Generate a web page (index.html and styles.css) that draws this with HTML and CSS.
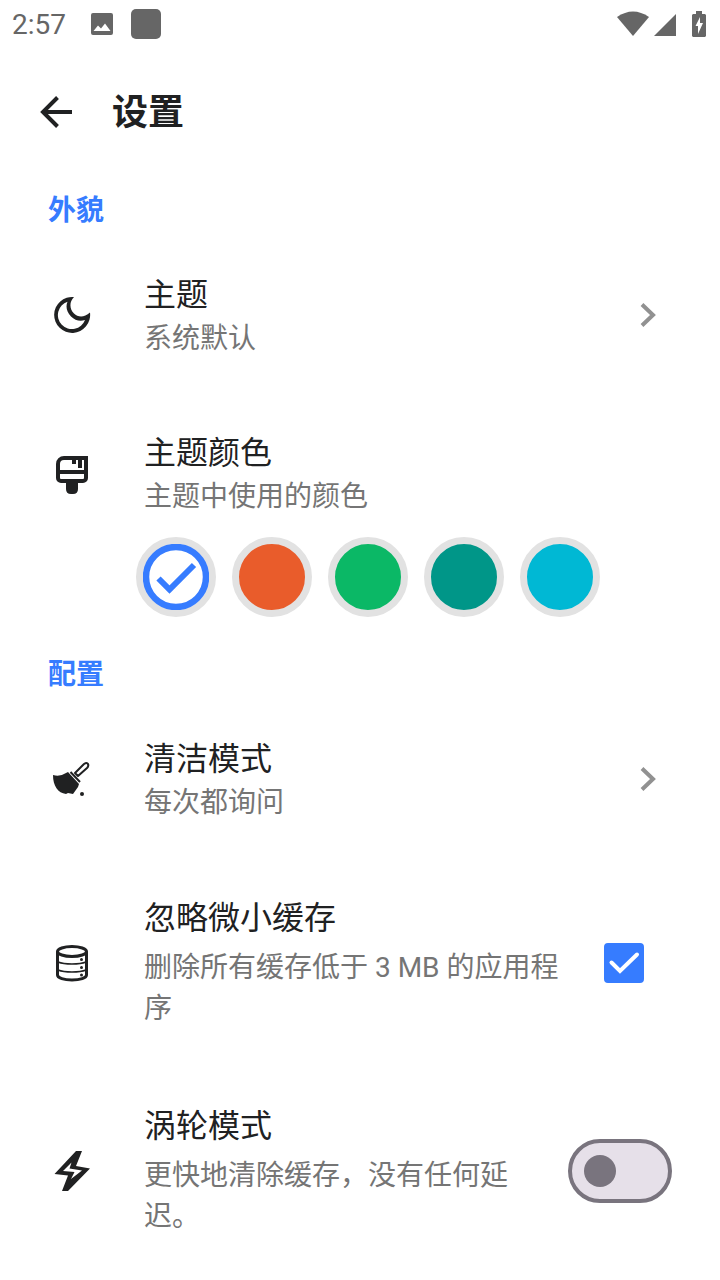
FILE: index.html
```html
<!DOCTYPE html>
<html lang="zh-CN">
<head>
<meta charset="utf-8">
<meta name="viewport" content="width=device-width, initial-scale=1">
<title>设置</title>
<link rel="stylesheet" href="styles.css">
</head>
<body>
<div class="status">
  <span class="clock">2:57</span>
  <svg class="status-picture" width="24" height="24" viewBox="0 0 24 24" aria-hidden="true"><path fill="#666" fill-rule="evenodd" d="M3 1h18a2 2 0 0 1 2 2v18a2 2 0 0 1-2 2H3a2 2 0 0 1-2-2V3a2 2 0 0 1 2-2zM3.500 19h17l-5.500-7.500-4 5-3-3z"/></svg>
  <span class="status-app"></span>
  <svg class="wifi" width="32" height="26" viewBox="0 0 32 26" aria-hidden="true"><path fill="#666" d="M0 6Q16-5 32 6L16 25z"/></svg>
  <svg class="signal" width="22" height="22" viewBox="0 0 22 22" aria-hidden="true"><path fill="#666" d="M22 0v22H0z"/></svg>
  <svg class="battery" width="14" height="26" viewBox="0 0 14 26" aria-hidden="true"><path fill="#666" fill-rule="evenodd" d="M4 0h6v3h3l1 1v21l-1 1H1l-1-1V4l1-1h3zM8 6L3.500 15H6v8l5-11H8z"/></svg>
</div>

<header class="appbar">
  <button class="back" type="button" aria-label="返回">
    <svg width="32" height="32" viewBox="0 0 32 32" aria-hidden="true"><path fill="none" stroke="#202122" stroke-width="4" d="M32 16H3M17.500 1.500L3 16l14.500 14.500"/></svg>
  </button>
  <h1 class="title">设置</h1>
</header>

<main>
  <section>
    <h2 class="heading">外貌</h2>
    <button class="row" type="button">
      <svg class="icon" width="48" height="48" viewBox="0 0 48 48" aria-hidden="true"><path fill="#202122" fill-rule="evenodd" d="M26 6A18 18 0 1 0 42 21.500C36 27 30 26.500 26 22.500C21.500 18 21 11 26 6zM19.500 10.800A14 14 0 1 0 37 29C32 30.500 27 29.500 23 25.500C18.500 21 17.500 15.500 19.500 10.800z"/></svg>
      <span class="text"><span class="name">主题</span><span class="note">系统默认</span></span>
      <svg class="chevron" width="16" height="24" viewBox="0 0 16 24" aria-hidden="true"><path fill="none" stroke="#919191" stroke-width="4" d="M2 1.500L13 12 2 22.500"/></svg>
    </button>
    <div class="row row-colors">
      <svg class="icon" width="48" height="48" viewBox="0 0 48 48" aria-hidden="true"><path fill="none" stroke="#202122" stroke-width="4" d="M16 7h22v20a3 3 0 0 1-3 3H13a3 3 0 0 1-3-3V13a6 6 0 0 1 6-6zM10 21h28"/><path fill="#202122" d="M24 8h4v5h-4zM30 8h4v9h-4zM18 30h12v8q0 5-5 5h-2q-5 0-5-5z"/></svg>
      <span class="text"><span class="name">主题颜色</span><span class="note">主题中使用的颜色</span></span>
    </div>
    <div class="swatches" role="group" aria-label="主题颜色">
      <button class="swatch blue" type="button" aria-label="蓝色" aria-pressed="true"><svg width="66" height="66" viewBox="1 1 66 66" aria-hidden="true"><circle cx="34" cy="34" r="30" fill="#fff" stroke="#367cff" stroke-width="6.500"/><path fill="none" stroke="#367cff" stroke-width="6" d="M16.500 35.500L27.500 46.500L52 22"/></svg></button>
      <button class="swatch orange" type="button" aria-label="橙色" aria-pressed="false"></button>
      <button class="swatch green" type="button" aria-label="绿色" aria-pressed="false"></button>
      <button class="swatch teal" type="button" aria-label="蓝绿色" aria-pressed="false"></button>
      <button class="swatch cyan" type="button" aria-label="青色" aria-pressed="false"></button>
    </div>
  </section>

  <section>
    <h2 class="heading">配置</h2>
    <button class="row" type="button">
      <svg class="icon" width="48" height="48" viewBox="0 0 48 48" aria-hidden="true"><path fill="#202122" d="M5 20q7 2 13-2l2-1 11 12-1 3-5 7-5-1-2 1C10 38 5 31 5 20z"/><path fill="none" stroke="#202122" stroke-width="2" d="M22.500 17L32 27"/><path fill="none" stroke="#202122" stroke-width="2" stroke-linejoin="round" d="M27 18l9-9q3-2 4 0t-1 4l-9 8z"/><circle cx="34" cy="39" r="2" fill="#202122"/></svg>
      <span class="text"><span class="name">清洁模式</span><span class="note">每次都询问</span></span>
      <svg class="chevron" width="16" height="24" viewBox="0 0 16 24" aria-hidden="true"><path fill="none" stroke="#919191" stroke-width="4" d="M2 1.500L13 12 2 22.500"/></svg>
    </button>
    <label class="row row-tall">
      <svg class="icon" width="48" height="48" viewBox="0 0 48 48" aria-hidden="true"><g fill="none" stroke="#202122"><ellipse cx="24" cy="12.500" rx="14.500" ry="5" stroke-width="3"/><path stroke-width="3" d="M9.500 12.500V36c0 3 6.500 5 14.500 5s14.500-2 14.500-5V12.500"/><path stroke-width="1.500" d="M10 23q5 2 14 2t14-2M10 31q5 2 14 2t14-2"/></g><g fill="#202122"><circle cx="33.500" cy="20.500" r="1.500"/><circle cx="33.500" cy="28.500" r="1.500"/><circle cx="33.500" cy="36" r="1.500"/></g></svg>
      <span class="text"><span class="name">忽略微小缓存</span><span class="note">删除所有缓存低于 3 MB 的应用程序</span></span>
      <span class="check">
        <input class="check-input" type="checkbox" checked>
        <svg class="check-mark" width="40" height="40" viewBox="0 0 40 40" aria-hidden="true"><path fill="none" stroke="#fff" stroke-width="4" stroke-linecap="round" d="M7.500 19.500L16 28 33 11.500"/></svg>
      </span>
    </label>
    <label class="row row-tall">
      <svg class="icon" width="48" height="48" viewBox="0 0 48 48" aria-hidden="true"><path fill="#202122" fill-rule="evenodd" d="M28 4h6l-6 15 14 2.500L20 44h-6l6-15.500L6.500 27zM23.500 15.500L15 24l11.500 1-3.500 7L34 23.500 21.500 21.500z"/></svg>
      <span class="text"><span class="name">涡轮模式</span><span class="note">更快地清除缓存，没有任何延迟。</span></span>
      <input class="switch" type="checkbox" role="switch">
    </label>
  </section>
</main>
</body>
</html>
```
FILE: styles.css
```css
* {
  box-sizing: border-box;
}

body {
  margin: 0;
  background: #fff;
  color: #202122;
  font-family: Roboto, "Noto Sans CJK SC", sans-serif;
}

button {
  margin: 0;
  padding: 0;
  border: 0;
  background: none;
  color: inherit;
  font: inherit;
  text-align: left;
  cursor: pointer;
}

svg {
  display: block;
  flex: none;
}

.status {
  display: flex;
  align-items: center;
  height: 48px;
  padding: 0 14px 0 12px;
}

.clock {
  color: #666;
  font-size: 28px;
  line-height: 48px;
  padding-top: 2px;
}

.status-picture {
  margin-left: 24px;
}

.status-app {
  width: 30px;
  height: 30px;
  margin-left: 17px;
  border-radius: 5px;
  background: #666;
}

.wifi {
  margin-left: auto;
}

.signal {
  margin: 2px 16px 0 5px;
}

.appbar {
  display: flex;
  align-items: center;
  gap: 40px;
  height: 128px;
  padding: 0 40px;
}

.title {
  margin: 0;
  padding-top: 2px;
  font-size: 36px;
  font-weight: 700;
  line-height: 52px;
}

.heading {
  margin: 0;
  padding: 12px 48px 1px;
  color: #367cff;
  font-size: 28px;
  font-weight: 700;
  line-height: 46px;
}

.row {
  display: flex;
  align-items: center;
  width: 100%;
  min-height: 160px;
  padding: 32px 48px;
}

.row-colors {
  min-height: 142px;
  padding-top: 18px;
  padding-bottom: 0;
}

.row-tall {
  min-height: 208px;
  cursor: pointer;
}

.text {
  flex: 1;
  display: flex;
  flex-direction: column;
  min-width: 0;
  margin-left: 48px;
}

.row-colors .text,
.row-tall .text {
  padding-bottom: 3px;
}

.row-tall .text {
  gap: 6px;
}

.name {
  font-size: 32px;
  line-height: 46px;
}

.note {
  color: #757575;
  font-size: 28px;
  line-height: 41px;
}

.chevron {
  margin: 0 16px;
}

.swatches {
  display: flex;
  gap: 16px;
  padding: 0 136px 23px;
}

.swatch {
  display: grid;
  flex: none;
  place-content: center;
  width: 80px;
  height: 80px;
  border: 7px solid #e2e2e2;
  border-radius: 50%;
}

.orange {
  background: #e95c2b;
}

.green {
  background: #0bb866;
}

.teal {
  background: #009688;
}

.cyan {
  background: #00b8d4;
}

.check {
  display: grid;
  flex: none;
  margin: 0 28px;
}

.check-input,
.check-mark {
  grid-area: 1 / 1;
}

.check-input {
  width: 40px;
  height: 40px;
  margin: 0;
  border: 2px solid #757575;
  border-radius: 4px;
  appearance: none;
}

.check-input:checked {
  border-color: #367cff;
  background: #367cff;
}

.check-mark {
  pointer-events: none;
}

.switch {
  display: flex;
  flex: none;
  align-items: center;
  width: 104px;
  height: 64px;
  margin: 0 0 0 32px;
  padding: 0 12px;
  border: 4px solid #79747e;
  border-radius: 32px;
  background: #e6e0e9;
  appearance: none;
}

.switch::before {
  content: "";
  width: 32px;
  height: 32px;
  border-radius: 50%;
  background: #79747e;
}

.switch:checked {
  justify-content: flex-end;
}
```
